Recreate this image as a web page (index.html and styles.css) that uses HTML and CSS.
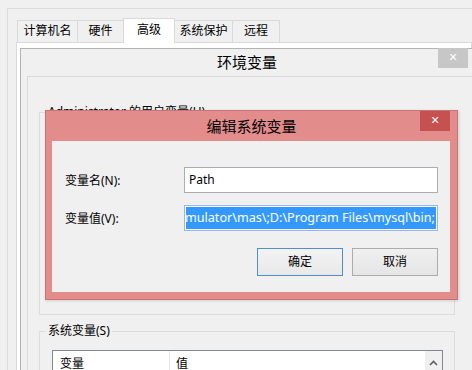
FILE: index.html
```html
<!doctype html>
<html>
<head>
<meta charset="utf-8">
<title>编辑系统变量</title>
<link rel="stylesheet" href="styles.css">
</head>
<body>
<div class="props">
	<div class="tabs">
		<div class="tab t1">计算机名</div>
		<div class="tab t2">硬件</div>
		<div class="tab t3 active">高级</div>
		<div class="tab t4">系统保护</div>
		<div class="tab t5">远程</div>
	</div>
	<div class="page"></div>
</div>

<div class="window env">
	<div class="titlebar">
		<span class="title">环境变量</span>
		<span class="close close-gray">&#x2715;</span>
	</div>
	<div class="client">
		<fieldset class="group user">
			<legend>Administrator 的用户变量(U)</legend>
		</fieldset>
		<fieldset class="group system">
			<legend>系统变量(S)</legend>
			<div class="list">
				<div class="list-head">
					<span class="col-name">变量</span>
					<span class="col-value">值</span>
				</div>
				<div class="scrollbar">
					<svg width="9" height="6" viewBox="0 0 9 6"><path d="M1 5 L4.5 1.5 L8 5" fill="none" stroke="#606060" stroke-width="1.6"/></svg>
				</div>
			</div>
		</fieldset>
	</div>
</div>

<div class="window edit">
	<div class="titlebar">
		<span class="title">编辑系统变量</span>
		<span class="close close-red">&#x2715;</span>
	</div>
	<div class="client">
		<div class="form">
			<label class="label">变量名(N):</label>
			<div class="field">Path</div>
			<label class="label">变量值(V):</label>
			<div class="field focused"><span class="selected"><span>mulator\mas\;D:\Program Files\mysql\bin;</span></span></div>
		</div>
		<div class="buttons">
			<div class="button default">确定</div>
			<div class="button">取消</div>
		</div>
	</div>
</div>
</body>
</html>
```

FILE: styles.css
```css
html, body {
	margin: 0;
	padding: 0;
}
body {
	width: 472px;
	height: 370px;
	overflow: hidden;
	position: relative;
	background: #f0f0f0;
	font-family: "Noto Sans", "Noto Sans CJK SC", sans-serif;
	font-size: 12px;
	color: #000;
}

/* system properties behind everything */
.props {
	margin: 8px 0 0 7px;
	height: 361px;
	border-left: 1px solid #dcdcdc;
	border-top: 1px solid #dcdcdc;
	padding: 9px 0 0 9px;
}
.tabs {
	display: flex;
	align-items: flex-end;
	height: 24px;
}
.tab {
	box-sizing: border-box;
	height: 22px;
	border: 1px solid #d9d9d9;
	border-bottom: none;
	background: #f0f0f0;
	margin-left: -1px;
	text-align: center;
	line-height: 20px;
}
.t1 { width: 61px; margin-left: 0; }
.t2 { width: 47px; }
.t3 { width: 52px; }
.t4 { width: 59px; }
.t5 { width: 48px; }
.tab.active {
	height: 25px;
	margin-bottom: -1px;
	background: #fff;
	position: relative;
	z-index: 1;
	line-height: 22px;
}
.page {
	margin-left: -1px;
	height: 330px;
	border: 1px solid #d9d9d9;
	background: #fff;
}

/* windows */
.window {
	position: absolute;
	box-sizing: border-box;
	display: flex;
	flex-direction: column;
}
.titlebar {
	position: relative;
	text-align: center;
	font-size: 15px;
}
.close {
	position: absolute;
	top: 0;
	width: 30px;
	height: 20px;
	line-height: 20px;
	text-align: center;
	color: #fff;
	font-size: 11px;
	font-weight: bold;
	font-family: "DejaVu Sans", sans-serif;
}

.env {
	left: 20px;
	top: 48px;
	width: 454px;
	height: 322px;
	border: 1px solid #b4b4b4;
	border-bottom: none;
	background: #f0f0f0;
}
.env .titlebar {
	height: 29px;
	line-height: 27px;
}
.close-gray {
	right: 5px;
	top: -1px;
	height: 20px;
	background: #c7c7c7;
}
.env .client {
	flex: 1;
	margin: 0 0 0 6px;
	border-top: 1px solid #dadada;
	border-left: 1px solid #dadada;
	padding: 0 0 0 11px;
}
.group {
	box-sizing: border-box;
	width: 416px;
	margin: 0;
	padding: 0 0 0 6px;
	border: 1px solid #dcdcdc;
}
.group legend {
	padding: 0 2px;
	line-height: 16px;
}
.user {
	margin-top: 27px;
	height: 211px;
}
.system {
	margin-top: 8px;
	height: 50px;
	border-bottom: none;
}
.list {
	display: flex;
	margin: 11px 0 0 6px;
	width: 391px;
	height: 30px;
	box-sizing: border-box;
	border: 1px solid #828790;
	border-bottom: none;
	background: #fff;
}
.list-head {
	flex: 1;
	display: flex;
	height: 25px;
	line-height: 25px;
}
.col-name {
	width: 117px;
	padding-left: 7px;
	box-sizing: border-box;
	border-right: 1px solid #e5e5e5;
}
.col-value {
	padding-left: 6px;
}
.scrollbar {
	width: 17px;
	background: #f0f0f0;
	display: flex;
	justify-content: center;
	padding-top: 9px;
	box-sizing: border-box;
}

/* edit dialog */
.edit {
	left: 45px;
	top: 110px;
	width: 413px;
	height: 190px;
	border: 1px solid #c97474;
	background: #e38c8c;
	box-shadow: 1px 1px 3px rgba(0,0,0,0.15);
}
.edit .titlebar {
	height: 30px;
	line-height: 31px;
}
.close-red {
	right: 7px;
	top: 0;
	background: #c75050;
}
.edit .client {
	flex: 1;
	margin: 0 7px 7px 6px;
	background: #f0f0f0;
	padding: 26px 12px 0 13px;
}
.form {
	display: grid;
	grid-template-columns: 119px 254px;
	grid-auto-rows: 26px;
	row-gap: 12px;
	align-items: center;
}
.field {
	box-sizing: border-box;
	height: 26px;
	border: 1px solid #abadb3;
	background: #fff;
	padding: 0 4px;
	line-height: 24px;
	white-space: nowrap;
	overflow: hidden;
}
.field.focused {
	border-color: #9ab6d8;
	padding: 1px;
	font-size: 12.6px;
}
.selected {
	display: flex;
	justify-content: flex-end;
	overflow: hidden;
	height: 22px;
	line-height: 22px;
	background: #3399ff;
	color: #fff;
	padding-right: 1px;
}
.selected span {
	flex: none;
}
.buttons {
	display: flex;
	justify-content: flex-end;
	gap: 9px;
	margin-top: 17px;
}
.button {
	box-sizing: border-box;
	width: 86px;
	height: 28px;
	line-height: 26px;
	text-align: center;
	border: 1px solid #acacac;
	background: linear-gradient(#f0f0f0, #e5e5e5);
}
.button.default {
	border-color: #4f8fd0;
	background: linear-gradient(#f3f3f3, #e8e8e8);
}
```
